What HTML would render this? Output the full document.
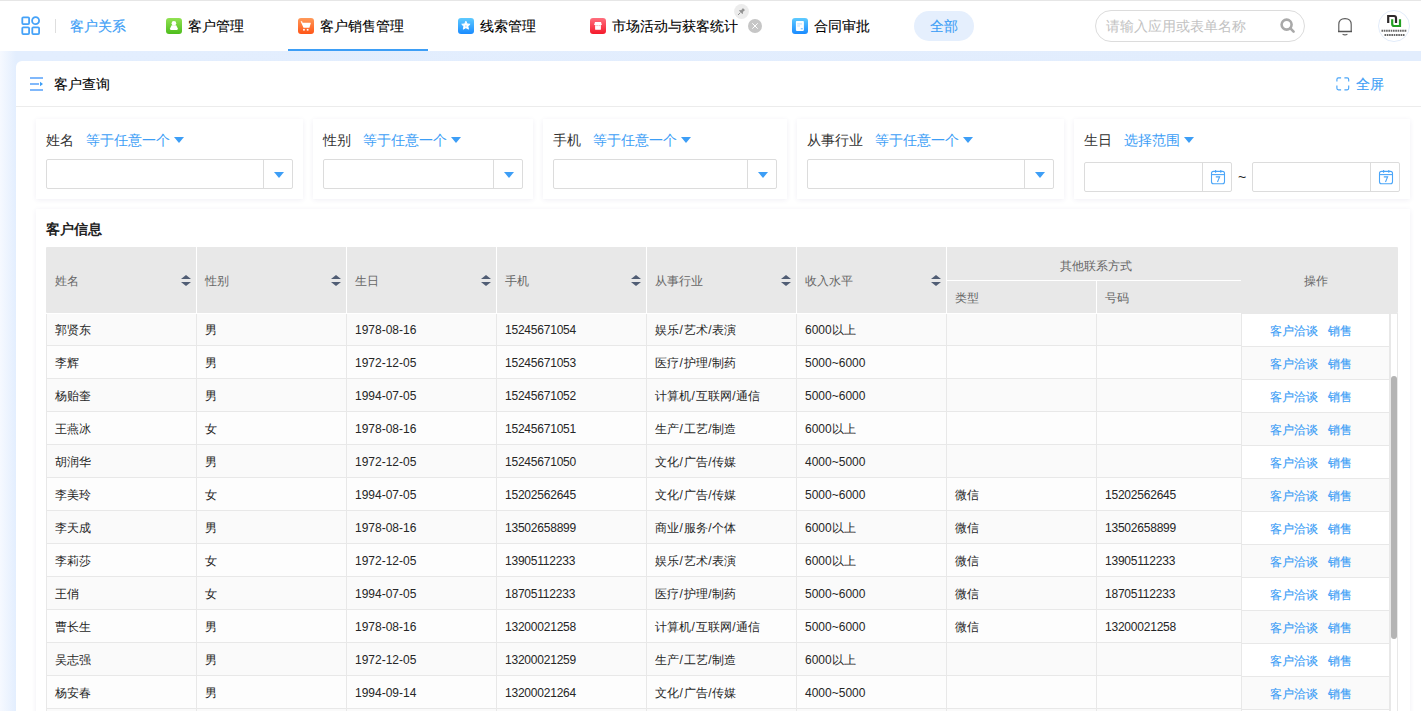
<!DOCTYPE html>
<html><head><meta charset="utf-8"><style>
*{box-sizing:border-box;margin:0;padding:0}
html,body{width:1421px;height:711px;overflow:hidden}
body{position:relative;font-family:"Liberation Sans",sans-serif;font-size:14px;color:#333;background:#e4eefb}
.a{position:absolute}
.topline{position:absolute;left:0;top:0;width:1421px;height:1px;background:#e6e6e6}
.hdr{position:absolute;left:0;top:1px;width:1421px;height:50px;background:#fff}
.band{position:absolute;left:0;top:51px;width:1421px;height:660px;background:linear-gradient(90deg,#f6f9ff 0px,#e3eefe 16px,#e2edfd 100%)}
.t14{position:absolute;font-size:14px;line-height:14px;white-space:nowrap}
.dk{color:#000;-webkit-text-stroke:0.1px #000}
.tabicon{position:absolute;top:18px;width:16px;height:16px;border-radius:3px}
.card{position:absolute;left:16px;top:61px;width:1420px;height:700px;background:#fff;border-radius:6px 0 0 0}
.content{position:absolute;left:16px;top:107px;width:1410px;height:620px;background:#fff}
.fcard{position:absolute;top:119px;height:80px;background:#fff;box-shadow:0 1px 5px rgba(60,40,120,0.075)}
.flabel{position:absolute;top:133px;font-size:14px;line-height:14px;color:#333;white-space:nowrap}
.fop{position:absolute;top:133px;font-size:14px;line-height:14px;color:#3d9ef6;white-space:nowrap}
.tri{position:absolute;width:0;height:0;border-left:5px solid transparent;border-right:5px solid transparent;border-top:6px solid #3d9ef6}
.inp{position:absolute;height:30px;border:1px solid #dcdcdc;border-radius:2px;background:#fff}
.inp .btn{position:absolute;right:0;top:0;width:29px;height:28px;border-left:1px solid #dcdcdc}
.inp .btn i{position:absolute;left:10px;top:12px;width:0;height:0;border-left:5px solid transparent;border-right:5px solid transparent;border-top:6px solid #3d9ef6}
.tcard{position:absolute;left:36px;top:209px;width:1374px;height:520px;background:#fff;box-shadow:0 1px 5px rgba(60,40,120,0.075)}
.thead{position:absolute;left:46px;top:247px;width:1352px;height:66px;background:#e8e8e8;border-radius:1px}
.th{position:absolute;top:275px;font-size:12px;line-height:12px;color:#666;white-space:nowrap}
.sort{position:absolute;top:275px;width:10px;height:12px}
.sort .up{position:absolute;left:0;top:-0.3px;width:0;height:0;border-left:5px solid transparent;border-right:5px solid transparent;border-bottom:4.5px solid #505d74}
.sort .dn{position:absolute;left:0;top:7px;width:0;height:0;border-left:5px solid transparent;border-right:5px solid transparent;border-top:4.5px solid #505d74}
.vd{position:absolute;width:1px;background:#fff}
.tr{position:absolute;left:46px;width:1195px;height:33px;border-bottom:1px solid #e8e8e8}
.td{position:absolute;height:33px;padding-left:8px;padding-top:1px;font-size:12px;line-height:33px;color:#262626;border-left:1px solid #e8e8e8;white-space:nowrap}
.fx{position:absolute;left:1241px;width:149px;height:33px;border-bottom:1px solid #e8e8e8;border-left:1px solid #e8e8e8;border-right:1px solid #e8e8e8;font-size:12px;line-height:33px;padding-top:1px;padding-left:28px;white-space:nowrap}
.lk{color:#3d9ef6;-webkit-text-stroke:0.15px #3d9ef6}
.lk2{margin-left:10px}

.sl{margin:0 0.6px}

</style></head><body>
<div class="topline"></div>
<div class="hdr"></div>
<div class="band"></div>
<!-- header content -->
<svg class="a" style="left:21px;top:16px" width="20" height="20" viewBox="0 0 20 20">
 <g fill="none" stroke="#45a2f8" stroke-width="1.8">
  <rect x="1.3" y="1.3" width="6.8" height="6.8" rx="1"/>
  <circle cx="14.6" cy="4.7" r="3.5"/>
  <rect x="1.3" y="11.3" width="6.8" height="6.8" rx="1"/>
  <rect x="11.3" y="11.3" width="6.8" height="6.8" rx="1"/>
 </g>
</svg>
<div class="a" style="left:55px;top:19px;width:1px;height:14px;background:#dedede"></div>
<div class="t14" style="left:70px;top:19px;color:#3d9ef6;-webkit-text-stroke:0.15px #3d9ef6">客户关系</div>

<svg class="a" style="left:166px;top:18px" width="16" height="16" viewBox="0 0 16 16"><defs><linearGradient id="gG" x1="0" y1="0" x2="0" y2="1"><stop offset="0" stop-color="#92e253"/><stop offset="1" stop-color="#4dbd1c"/></linearGradient></defs><rect width="16" height="16" rx="3" fill="url(#gG)"/><circle cx="7.9" cy="5.3" r="2.3" fill="#fff"/><path d="M5.6 7.2 h4.6 l1.6 3.4 q0.3 1.3 -1 1.3 h-5.8 q-1.3 0 -1 -1.3 z" fill="#fff"/></svg>
<div class="t14 dk" style="left:188px;top:19px">客户管理</div>

<svg class="a" style="left:298px;top:18px" width="16" height="16" viewBox="0 0 16 16"><defs><linearGradient id="gO" x1="0" y1="0" x2="0" y2="1"><stop offset="0" stop-color="#ff9a5a"/><stop offset="1" stop-color="#ff5517"/></linearGradient></defs><rect width="16" height="16" rx="3" fill="url(#gO)"/><path d="M2.6 3.2 h1.5 l0.5 1.6 h8 q0.3 0 0.2 0.4 l-1.4 4.6 h-5.9 z" fill="#fff"/><rect x="5.1" y="10.9" width="1.7" height="1.7" fill="#fff"/><rect x="8.8" y="10.9" width="1.7" height="1.7" fill="#fff"/></svg>
<div class="t14 dk" style="left:320px;top:19px">客户销售管理</div>
<div class="a" style="left:288px;top:49px;width:140px;height:2px;background:#3d9ef6"></div>

<svg class="a" style="left:458px;top:18px" width="16" height="16" viewBox="0 0 16 16"><defs><linearGradient id="gB" x1="0" y1="0" x2="0" y2="1"><stop offset="0" stop-color="#5fcbff"/><stop offset="1" stop-color="#1a8bff"/></linearGradient></defs><rect width="16" height="16" rx="3" fill="url(#gB)"/><path d="M7.90 3.20 L9.13 5.90 L12.08 6.24 L9.90 8.25 L10.49 11.16 L7.90 9.70 L5.31 11.16 L5.90 8.25 L3.72 6.24 L6.67 5.90 z" fill="#fff" stroke="#fff" stroke-width="0.9" stroke-linejoin="round"/><circle cx="7.9" cy="7.9" r="0.9" fill="#bfe6ff"/></svg>
<div class="t14 dk" style="left:480px;top:19px">线索管理</div>

<svg class="a" style="left:590px;top:18px" width="16" height="16" viewBox="0 0 16 16"><defs><linearGradient id="gR" x1="0" y1="0" x2="0" y2="1"><stop offset="0" stop-color="#ff6f7e"/><stop offset="1" stop-color="#f5192b"/></linearGradient></defs><rect width="16" height="16" rx="3" fill="url(#gR)"/><path d="M5 4.1 h6 l0.9 3 h-7.8 z" fill="#fff"/><rect x="5.1" y="7" width="5.8" height="4.8" rx="0.5" fill="#fff"/><path d="M5.6 7.6 h4.8" stroke="#fca6ae" stroke-width="0.9" stroke-dasharray="1.1 0.5"/></svg>
<div class="t14 dk" style="left:612px;top:19px">市场活动与获客统计</div>
<svg class="a" style="left:734px;top:4px" width="15" height="15" viewBox="0 0 15 15"><circle cx="7.5" cy="7.5" r="7.4" fill="#ececec"/><path d="M8.8 3.9 l2.4 2.4 -0.9 0.3 -1.4 1.4 0.1 1.5 -0.6 0.5 -3.3 -3.3 0.5 -0.6 1.5 0.1 1.4 -1.4 z" fill="#939393"/><path d="M6.4 8.6 l-2.4 2.4" stroke="#939393" stroke-width="1"/></svg>
<svg class="a" style="left:748px;top:19px" width="14" height="14" viewBox="0 0 14 14"><circle cx="7" cy="7" r="7" fill="#c6c6c6"/><path d="M4.3 4.3 L9.7 9.7 M9.7 4.3 L4.3 9.7" stroke="#fff" stroke-width="1"/></svg>

<svg class="a" style="left:792px;top:18px" width="16" height="16" viewBox="0 0 16 16"><rect width="16" height="16" rx="3" fill="url(#gB)"/><rect x="3.9" y="3.1" width="8" height="9.8" rx="0.8" fill="#fff"/><rect x="5.2" y="5.3" width="4.8" height="1.2" fill="#c3e4ff"/><rect x="5.2" y="7.4" width="2.8" height="1.1" fill="#c3e4ff"/><rect x="8.8" y="10" width="2" height="1.4" fill="#8ccbff"/></svg>
<div class="t14 dk" style="left:814px;top:19px">合同审批</div>

<div class="a" style="left:914px;top:11px;width:60px;height:30px;border-radius:15px;background:#e5effd"></div>
<div class="t14" style="left:930px;top:19px;color:#3d9ef6;-webkit-text-stroke:0.1px #3d9ef6">全部</div>

<div class="a" style="left:1095px;top:10px;width:210px;height:32px;border-radius:16px;border:1px solid #dcdcdc;background:#fff"></div>
<div class="t14" style="left:1106px;top:19px;color:#c2c2c2">请输入应用或表单名称</div>
<svg class="a" style="left:1279px;top:17px" width="17" height="17" viewBox="0 0 17 17"><circle cx="7.6" cy="7.6" r="5" fill="none" stroke="#a9a9a9" stroke-width="2.6"/><path d="M11.2 11.2 L14.6 14.6" stroke="#a9a9a9" stroke-width="2.6" stroke-linecap="round"/></svg>
<svg class="a" style="left:1336px;top:17px" width="18" height="20" viewBox="0 0 18 20"><path d="M2.8 14.4 V7.6 Q2.8 1.6 9 1.6 Q15.2 1.6 15.2 7.6 V14.4" fill="none" stroke="#5c5c5c" stroke-width="1.15"/><path d="M2 14.5 H16" stroke="#555" stroke-width="1.5"/><path d="M6.6 17.2 Q9 18.4 11.4 17.2" fill="none" stroke="#5c5c5c" stroke-width="1.2"/></svg>

<svg class="a" style="left:1378px;top:10px" width="32" height="32" viewBox="0 0 32 32"><circle cx="16" cy="16" r="15.5" fill="#fff" stroke="#e2ecfa" stroke-width="1"/><path d="M10.2 13 V6 H16 Q18 6 18 8 V13" fill="none" stroke="#2e2a2b" stroke-width="2.2"/><path d="M14.2 9.2 V14 Q14.2 16 16.2 16 H22 V9.2" fill="none" stroke="#22a022" stroke-width="2.2"/><path d="M3.5 20.7 H29" stroke="#666" stroke-width="2" stroke-dasharray="1.6 0.7"/><path d="M6.5 25 H26.5" stroke="#666" stroke-width="2" stroke-dasharray="1.6 0.7"/></svg>

<!-- card -->
<div class="card"></div>
<svg class="a" style="left:29px;top:76px" width="15" height="16" viewBox="0 0 15 16"><rect x="1" y="1" width="13" height="2" fill="#80b8fb"/><rect x="1" y="7" width="9" height="2" fill="#80b8fb"/><path d="M11 5.8 L14 8 L11 10.2 z" fill="#3d9ef6"/><rect x="1" y="13" width="13" height="2" fill="#80b8fb"/></svg>
<div class="t14 dk" style="left:54px;top:77px">客户查询</div>
<svg class="a" style="left:1335px;top:76px" width="15" height="15" viewBox="0 0 15 15"><g fill="none" stroke="#4aa5f8" stroke-width="1.15"><path d="M1.9 5.6 V3.4 Q1.9 1.9 3.4 1.9 H6.1"/><path d="M9.4 1.9 H12.2 Q13.7 1.9 13.7 3.4 V5.6"/><path d="M13.7 9.5 V12.3 Q13.7 13.8 12.2 13.8 H9.4"/><path d="M6.1 13.8 H3.4 Q1.9 13.8 1.9 12.3 V9.5"/></g></svg>
<div class="t14" style="left:1356px;top:77px;color:#3d9ef6;-webkit-text-stroke:0.12px #3d9ef6">全屏</div>
<div class="a" style="left:16px;top:106px;width:1405px;height:1px;background:#ececec"></div>
<div class="content"></div>

<!-- filters -->
<div class="fcard" style="left:36px;width:267px"></div>
<div class="flabel" style="left:46px">姓名</div>
<div class="fop" style="left:86px">等于任意一个</div>
<div class="tri" style="left:174px;top:137px"></div>
<div class="inp" style="left:46px;top:159px;width:247px"><div class="btn"><i></i></div></div>

<div class="fcard" style="left:313px;width:220px"></div>
<div class="flabel" style="left:323px">性别</div>
<div class="fop" style="left:363px">等于任意一个</div>
<div class="tri" style="left:451px;top:137px"></div>
<div class="inp" style="left:323px;top:159px;width:200px"><div class="btn"><i></i></div></div>

<div class="fcard" style="left:543px;width:244px"></div>
<div class="flabel" style="left:553px">手机</div>
<div class="fop" style="left:593px">等于任意一个</div>
<div class="tri" style="left:681px;top:137px"></div>
<div class="inp" style="left:553px;top:159px;width:224px"><div class="btn"><i></i></div></div>

<div class="fcard" style="left:797px;width:267px"></div>
<div class="flabel" style="left:807px">从事行业</div>
<div class="fop" style="left:875px">等于任意一个</div>
<div class="tri" style="left:963px;top:137px"></div>
<div class="inp" style="left:807px;top:159px;width:247px"><div class="btn"><i></i></div></div>

<div class="fcard" style="left:1074px;width:336px"></div>
<div class="flabel" style="left:1084px">生日</div>
<div class="fop" style="left:1124px">选择范围</div>
<div class="tri" style="left:1184px;top:137px"></div>
<div class="inp" style="left:1084px;top:162px;width:148px"><div class="btn"></div></div>
<svg class="a" style="left:1210px;top:169px" width="16" height="16" viewBox="0 0 16 16"><g fill="none" stroke="#4aa5f8" stroke-width="1.1"><rect x="1.5" y="2.4" width="13" height="12.4" rx="2"/><path d="M1.5 5.6 H14.5"/><path d="M5.6 1 V3.8 M10.8 1 V3.8"/><path d="M5.8 7.9 H9.6 L7.5 13"/></g></svg>
<div class="t14" style="left:1238px;top:170px;color:#222">~</div>
<div class="inp" style="left:1252px;top:162px;width:148px"><div class="btn"></div></div>
<svg class="a" style="left:1378px;top:169px" width="16" height="16" viewBox="0 0 16 16"><g fill="none" stroke="#4aa5f8" stroke-width="1.1"><rect x="1.5" y="2.4" width="13" height="12.4" rx="2"/><path d="M1.5 5.6 H14.5"/><path d="M5.6 1 V3.8 M10.8 1 V3.8"/><path d="M5.8 7.9 H9.6 L7.5 13"/></g></svg>

<!-- table card -->
<div class="tcard"></div>
<div class="a" style="left:46px;top:222px;font-size:14px;line-height:14px;font-weight:bold;color:#222">客户信息</div>
<div class="thead"></div>
<div class="a" style="left:1241px;top:313px;width:157px;height:1px;background:#e8e8e8"></div>
<div class="a" style="left:46px;top:313px;width:1195px;height:1px;background:#fff;z-index:1"></div>
<div class="th" style="left:55px">姓名</div>
<div class="sort" style="left:181px"><i class="up"></i><i class="dn"></i></div>
<div class="th" style="left:205px">性别</div>
<div class="sort" style="left:331px"><i class="up"></i><i class="dn"></i></div>
<div class="vd" style="left:196px;top:247px;height:66px"></div>
<div class="th" style="left:355px">生日</div>
<div class="sort" style="left:481px"><i class="up"></i><i class="dn"></i></div>
<div class="vd" style="left:346px;top:247px;height:66px"></div>
<div class="th" style="left:505px">手机</div>
<div class="sort" style="left:631px"><i class="up"></i><i class="dn"></i></div>
<div class="vd" style="left:496px;top:247px;height:66px"></div>
<div class="th" style="left:655px">从事行业</div>
<div class="sort" style="left:781px"><i class="up"></i><i class="dn"></i></div>
<div class="vd" style="left:646px;top:247px;height:66px"></div>
<div class="th" style="left:805px">收入水平</div>
<div class="sort" style="left:931px"><i class="up"></i><i class="dn"></i></div>
<div class="vd" style="left:796px;top:247px;height:66px"></div>
<div class="t14" style="left:1060px;top:260px;font-size:12px;line-height:12px;color:#666">其他联系方式</div>
<div class="a" style="left:946px;top:280px;width:295px;height:1px;background:#fff"></div>
<div class="vd" style="left:946px;top:247px;height:66px"></div>
<div class="vd" style="left:1096px;top:281px;height:32px"></div>
<div class="th" style="left:955px;top:292px">类型</div>
<div class="th" style="left:1105px;top:292px">号码</div>
<div class="th" style="left:1304px">操作</div>
<div class="tr" style="top:313px;background:#fafafa"></div>
<div class="td" style="left:46px;top:313px;width:150px">郭贤东</div>
<div class="td" style="left:196px;top:313px;width:150px">男</div>
<div class="td" style="left:346px;top:313px;width:150px">1978-08-16</div>
<div class="td" style="left:496px;top:313px;width:150px;letter-spacing:-0.22px">15245671054</div>
<div class="td" style="left:646px;top:313px;width:150px">娱乐<span class="sl">/</span>艺术<span class="sl">/</span>表演</div>
<div class="td" style="left:796px;top:313px;width:150px">6000以上</div>
<div class="td" style="left:946px;top:313px;width:150px"></div>
<div class="td" style="left:1096px;top:313px;width:145px;letter-spacing:-0.22px"></div>
<div class="fx" style="top:314px;background:#ffffff"><span class="lk">客户洽谈</span><span class="lk lk2">销售</span></div>
<div class="tr" style="top:346px;background:#fdfdfd"></div>
<div class="td" style="left:46px;top:346px;width:150px">李辉</div>
<div class="td" style="left:196px;top:346px;width:150px">男</div>
<div class="td" style="left:346px;top:346px;width:150px">1972-12-05</div>
<div class="td" style="left:496px;top:346px;width:150px;letter-spacing:-0.22px">15245671053</div>
<div class="td" style="left:646px;top:346px;width:150px">医疗<span class="sl">/</span>护理<span class="sl">/</span>制药</div>
<div class="td" style="left:796px;top:346px;width:150px">5000~6000</div>
<div class="td" style="left:946px;top:346px;width:150px"></div>
<div class="td" style="left:1096px;top:346px;width:145px;letter-spacing:-0.22px"></div>
<div class="fx" style="top:347px;background:#fafafa"><span class="lk">客户洽谈</span><span class="lk lk2">销售</span></div>
<div class="tr" style="top:379px;background:#fafafa"></div>
<div class="td" style="left:46px;top:379px;width:150px">杨贻奎</div>
<div class="td" style="left:196px;top:379px;width:150px">男</div>
<div class="td" style="left:346px;top:379px;width:150px">1994-07-05</div>
<div class="td" style="left:496px;top:379px;width:150px;letter-spacing:-0.22px">15245671052</div>
<div class="td" style="left:646px;top:379px;width:150px">计算机<span class="sl">/</span>互联网<span class="sl">/</span>通信</div>
<div class="td" style="left:796px;top:379px;width:150px">5000~6000</div>
<div class="td" style="left:946px;top:379px;width:150px"></div>
<div class="td" style="left:1096px;top:379px;width:145px;letter-spacing:-0.22px"></div>
<div class="fx" style="top:380px;background:#ffffff"><span class="lk">客户洽谈</span><span class="lk lk2">销售</span></div>
<div class="tr" style="top:412px;background:#fdfdfd"></div>
<div class="td" style="left:46px;top:412px;width:150px">王燕冰</div>
<div class="td" style="left:196px;top:412px;width:150px">女</div>
<div class="td" style="left:346px;top:412px;width:150px">1978-08-16</div>
<div class="td" style="left:496px;top:412px;width:150px;letter-spacing:-0.22px">15245671051</div>
<div class="td" style="left:646px;top:412px;width:150px">生产<span class="sl">/</span>工艺<span class="sl">/</span>制造</div>
<div class="td" style="left:796px;top:412px;width:150px">6000以上</div>
<div class="td" style="left:946px;top:412px;width:150px"></div>
<div class="td" style="left:1096px;top:412px;width:145px;letter-spacing:-0.22px"></div>
<div class="fx" style="top:413px;background:#fafafa"><span class="lk">客户洽谈</span><span class="lk lk2">销售</span></div>
<div class="tr" style="top:445px;background:#fafafa"></div>
<div class="td" style="left:46px;top:445px;width:150px">胡润华</div>
<div class="td" style="left:196px;top:445px;width:150px">男</div>
<div class="td" style="left:346px;top:445px;width:150px">1972-12-05</div>
<div class="td" style="left:496px;top:445px;width:150px;letter-spacing:-0.22px">15245671050</div>
<div class="td" style="left:646px;top:445px;width:150px">文化<span class="sl">/</span>广告<span class="sl">/</span>传媒</div>
<div class="td" style="left:796px;top:445px;width:150px">4000~5000</div>
<div class="td" style="left:946px;top:445px;width:150px"></div>
<div class="td" style="left:1096px;top:445px;width:145px;letter-spacing:-0.22px"></div>
<div class="fx" style="top:446px;background:#ffffff"><span class="lk">客户洽谈</span><span class="lk lk2">销售</span></div>
<div class="tr" style="top:478px;background:#fdfdfd"></div>
<div class="td" style="left:46px;top:478px;width:150px">李美玲</div>
<div class="td" style="left:196px;top:478px;width:150px">女</div>
<div class="td" style="left:346px;top:478px;width:150px">1994-07-05</div>
<div class="td" style="left:496px;top:478px;width:150px;letter-spacing:-0.22px">15202562645</div>
<div class="td" style="left:646px;top:478px;width:150px">文化<span class="sl">/</span>广告<span class="sl">/</span>传媒</div>
<div class="td" style="left:796px;top:478px;width:150px">5000~6000</div>
<div class="td" style="left:946px;top:478px;width:150px">微信</div>
<div class="td" style="left:1096px;top:478px;width:145px;letter-spacing:-0.22px">15202562645</div>
<div class="fx" style="top:479px;background:#fafafa"><span class="lk">客户洽谈</span><span class="lk lk2">销售</span></div>
<div class="tr" style="top:511px;background:#fafafa"></div>
<div class="td" style="left:46px;top:511px;width:150px">李天成</div>
<div class="td" style="left:196px;top:511px;width:150px">男</div>
<div class="td" style="left:346px;top:511px;width:150px">1978-08-16</div>
<div class="td" style="left:496px;top:511px;width:150px;letter-spacing:-0.22px">13502658899</div>
<div class="td" style="left:646px;top:511px;width:150px">商业<span class="sl">/</span>服务<span class="sl">/</span>个体</div>
<div class="td" style="left:796px;top:511px;width:150px">6000以上</div>
<div class="td" style="left:946px;top:511px;width:150px">微信</div>
<div class="td" style="left:1096px;top:511px;width:145px;letter-spacing:-0.22px">13502658899</div>
<div class="fx" style="top:512px;background:#ffffff"><span class="lk">客户洽谈</span><span class="lk lk2">销售</span></div>
<div class="tr" style="top:544px;background:#fdfdfd"></div>
<div class="td" style="left:46px;top:544px;width:150px">李莉莎</div>
<div class="td" style="left:196px;top:544px;width:150px">女</div>
<div class="td" style="left:346px;top:544px;width:150px">1972-12-05</div>
<div class="td" style="left:496px;top:544px;width:150px;letter-spacing:-0.22px">13905112233</div>
<div class="td" style="left:646px;top:544px;width:150px">娱乐<span class="sl">/</span>艺术<span class="sl">/</span>表演</div>
<div class="td" style="left:796px;top:544px;width:150px">6000以上</div>
<div class="td" style="left:946px;top:544px;width:150px">微信</div>
<div class="td" style="left:1096px;top:544px;width:145px;letter-spacing:-0.22px">13905112233</div>
<div class="fx" style="top:545px;background:#fafafa"><span class="lk">客户洽谈</span><span class="lk lk2">销售</span></div>
<div class="tr" style="top:577px;background:#fafafa"></div>
<div class="td" style="left:46px;top:577px;width:150px">王俏</div>
<div class="td" style="left:196px;top:577px;width:150px">女</div>
<div class="td" style="left:346px;top:577px;width:150px">1994-07-05</div>
<div class="td" style="left:496px;top:577px;width:150px;letter-spacing:-0.22px">18705112233</div>
<div class="td" style="left:646px;top:577px;width:150px">医疗<span class="sl">/</span>护理<span class="sl">/</span>制药</div>
<div class="td" style="left:796px;top:577px;width:150px">5000~6000</div>
<div class="td" style="left:946px;top:577px;width:150px">微信</div>
<div class="td" style="left:1096px;top:577px;width:145px;letter-spacing:-0.22px">18705112233</div>
<div class="fx" style="top:578px;background:#ffffff"><span class="lk">客户洽谈</span><span class="lk lk2">销售</span></div>
<div class="tr" style="top:610px;background:#fdfdfd"></div>
<div class="td" style="left:46px;top:610px;width:150px">曹长生</div>
<div class="td" style="left:196px;top:610px;width:150px">男</div>
<div class="td" style="left:346px;top:610px;width:150px">1978-08-16</div>
<div class="td" style="left:496px;top:610px;width:150px;letter-spacing:-0.22px">13200021258</div>
<div class="td" style="left:646px;top:610px;width:150px">计算机<span class="sl">/</span>互联网<span class="sl">/</span>通信</div>
<div class="td" style="left:796px;top:610px;width:150px">5000~6000</div>
<div class="td" style="left:946px;top:610px;width:150px">微信</div>
<div class="td" style="left:1096px;top:610px;width:145px;letter-spacing:-0.22px">13200021258</div>
<div class="fx" style="top:611px;background:#fafafa"><span class="lk">客户洽谈</span><span class="lk lk2">销售</span></div>
<div class="tr" style="top:643px;background:#fafafa"></div>
<div class="td" style="left:46px;top:643px;width:150px">吴志强</div>
<div class="td" style="left:196px;top:643px;width:150px">男</div>
<div class="td" style="left:346px;top:643px;width:150px">1972-12-05</div>
<div class="td" style="left:496px;top:643px;width:150px;letter-spacing:-0.22px">13200021259</div>
<div class="td" style="left:646px;top:643px;width:150px">生产<span class="sl">/</span>工艺<span class="sl">/</span>制造</div>
<div class="td" style="left:796px;top:643px;width:150px">6000以上</div>
<div class="td" style="left:946px;top:643px;width:150px"></div>
<div class="td" style="left:1096px;top:643px;width:145px;letter-spacing:-0.22px"></div>
<div class="fx" style="top:644px;background:#ffffff"><span class="lk">客户洽谈</span><span class="lk lk2">销售</span></div>
<div class="tr" style="top:676px;background:#fdfdfd"></div>
<div class="td" style="left:46px;top:676px;width:150px">杨安春</div>
<div class="td" style="left:196px;top:676px;width:150px">男</div>
<div class="td" style="left:346px;top:676px;width:150px">1994-09-14</div>
<div class="td" style="left:496px;top:676px;width:150px;letter-spacing:-0.22px">13200021264</div>
<div class="td" style="left:646px;top:676px;width:150px">文化<span class="sl">/</span>广告<span class="sl">/</span>传媒</div>
<div class="td" style="left:796px;top:676px;width:150px">4000~5000</div>
<div class="td" style="left:946px;top:676px;width:150px"></div>
<div class="td" style="left:1096px;top:676px;width:145px;letter-spacing:-0.22px"></div>
<div class="fx" style="top:677px;background:#fafafa"><span class="lk">客户洽谈</span><span class="lk lk2">销售</span></div>
<div class="tr" style="top:709px;background:#fafafa"></div>
<div class="td" style="left:46px;top:709px;width:150px"></div>
<div class="td" style="left:196px;top:709px;width:150px"></div>
<div class="td" style="left:346px;top:709px;width:150px"></div>
<div class="td" style="left:496px;top:709px;width:150px;letter-spacing:-0.22px"></div>
<div class="td" style="left:646px;top:709px;width:150px"></div>
<div class="td" style="left:796px;top:709px;width:150px"></div>
<div class="td" style="left:946px;top:709px;width:150px"></div>
<div class="td" style="left:1096px;top:709px;width:145px;letter-spacing:-0.22px"></div>
<div class="fx" style="top:710px;background:#ffffff"><span class="lk">客户洽谈</span><span class="lk lk2">销售</span></div>
<div class="a" style="left:1390px;top:314px;width:8px;height:400px;background:#fff;border-left:1px solid #e8e8e8;border-right:1px solid #e8e8e8"></div>
<div class="a" style="left:1391px;top:376px;width:6px;height:263px;border-radius:3px;background:#b4b4b4"></div>

</body></html>
